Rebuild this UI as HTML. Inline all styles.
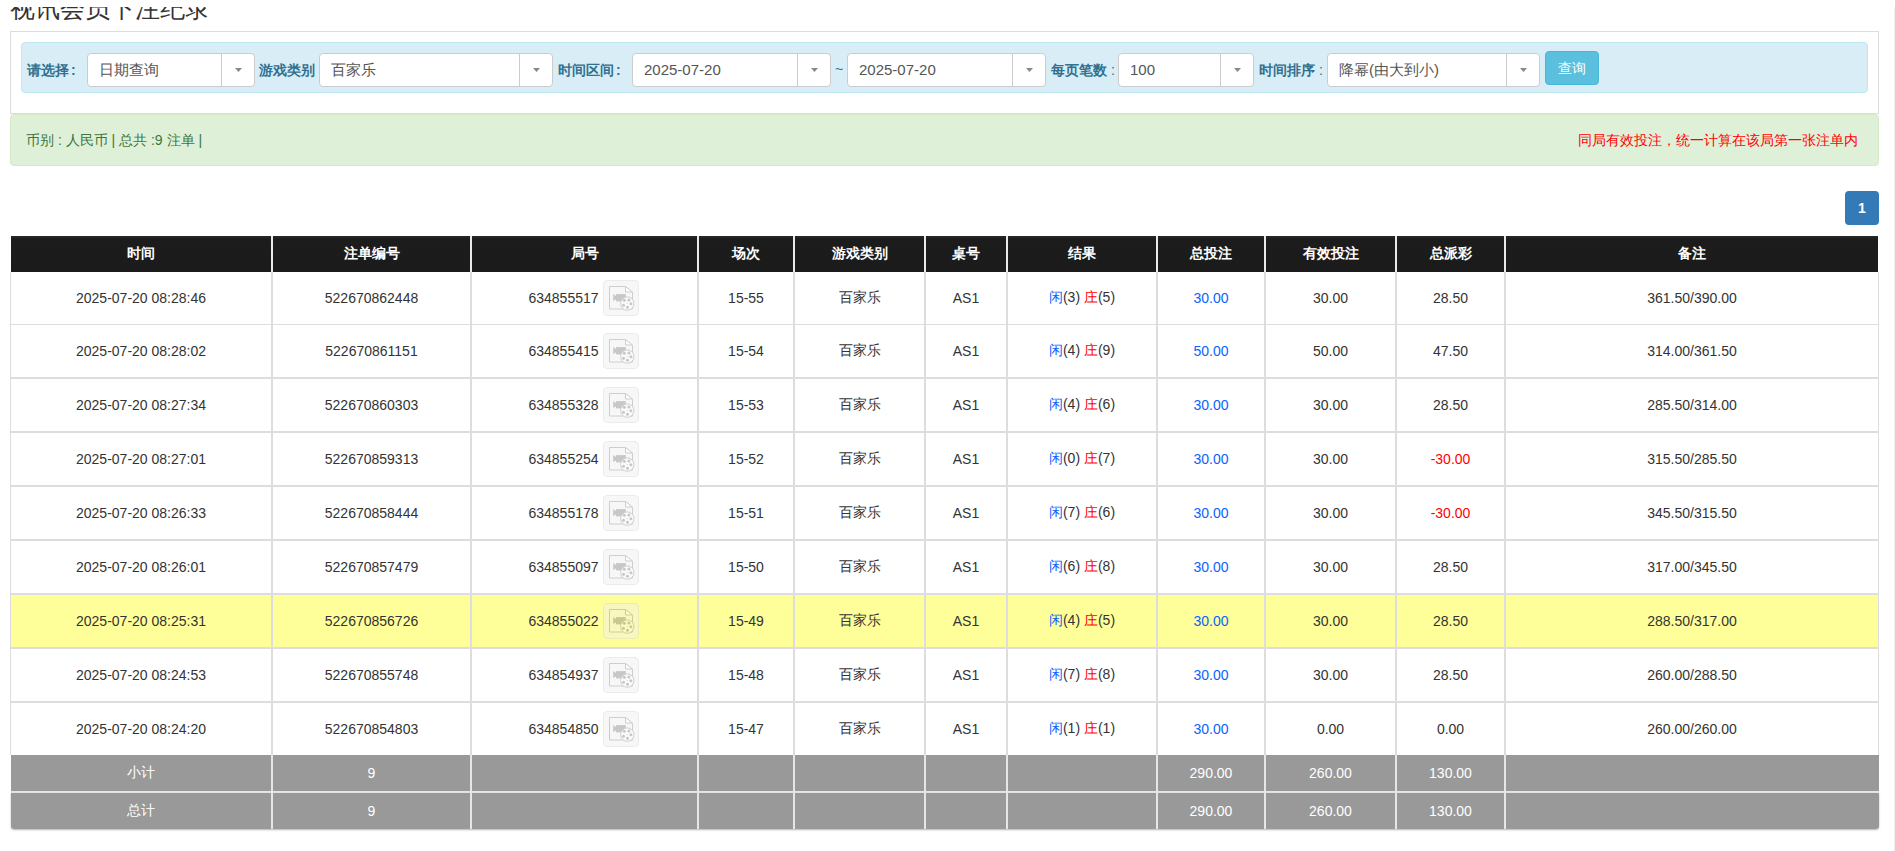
<!DOCTYPE html>
<html><head><meta charset="utf-8">
<style>
*{box-sizing:border-box;margin:0;padding:0}
html,body{width:1895px;height:851px;overflow:hidden;background:#fff}
body{font-family:"Liberation Sans",sans-serif;color:#333;position:relative}
.abs{position:absolute}
#title{left:10px;top:-6px;font-size:24.7px;line-height:30px;color:#333;white-space:nowrap}
#titlecover{left:0;top:0;width:1895px;height:7px;background:#fff}
#panel{left:10px;top:31px;width:1869px;height:83px;border:1px solid #ddd;background:#fff}
#info{left:21px;top:42px;width:1847px;height:51px;border:1px solid #bce8f1;background:#d9edf7;border-radius:4px}
.lbl{position:absolute;font-weight:bold;font-size:14px;color:#31708f;top:62px;line-height:17px;white-space:nowrap}
.sel{position:absolute;top:53px;height:34px;border:1px solid #ccc;border-radius:4px;background:#fff;font-size:15px;color:#555;line-height:32px;padding-left:11px;white-space:nowrap}
.sel .dv{position:absolute;top:0;bottom:0;width:1px;background:#ccc}
.sel .ct{position:absolute;top:14px;width:7px;height:4px;background:#888;clip-path:polygon(0 0,100% 0,50% 100%)}
#btn{left:1545px;top:51px;width:54px;height:34px;background:#5bc0de;border:1px solid #46b8da;border-radius:4px;color:#fff;font-size:14px;line-height:32px;text-align:center}
#ok{left:10px;top:114px;width:1869px;height:52px;background:#dff0d8;border:1px solid #d6e9c6;border-radius:4px}
#oktext{left:26px;top:131px;font-size:14px;color:#3c763d;line-height:18px;white-space:nowrap}
#notice{right:37px;top:131px;font-size:14px;color:#f00;line-height:18px;white-space:nowrap}
#page{left:1845px;top:191px;width:34px;height:34px;background:#337ab7;border-radius:4px;color:#fff;font-size:14px;font-weight:bold;line-height:34px;text-align:center}
#tbl{left:10px;top:236px;width:1869px}
.row{display:flex;position:relative}
.c{border-right:2px solid #ddd;display:flex;align-items:center;justify-content:center;font-size:14px;white-space:nowrap}
.hd .c{background:linear-gradient(#2a2a2a 0,#1c1c1c 3px,#1b1b1b);color:#fff;font-weight:bold;font-size:14px;border-right-color:#e9e9e9;height:36px}
.w1{width:262px}.w2{width:199px}.w3{width:227px}.w4{width:96px}.w5{width:131px}.w6{width:82px}.w7{width:150px}.w8{width:108px}.w9{width:131px}.w10{width:109px}.w11{width:373px;border-right-width:1px}
.bd{border-left:1px solid #ddd}
.bd .c{height:100%}
.blue{color:#0863ff}
.red{color:#f00}
.ico{display:inline-block;width:36px;height:36px;border:1px solid #d5d5d5;border-radius:4px;background:#efefef;margin-left:4px;margin-right:2px;position:relative;opacity:.45}.ico svg{position:absolute;left:-1px;top:-1px}
.yl{background:#ffff99}
.sum .c{background:#999;color:#fff;font-size:14px;border-right-color:#e6e6e6}
</style></head><body>
<div id="title" class="abs">视讯会员下注纪录</div>
<div id="titlecover" class="abs"></div>
<div class="abs" style="left:1894px;top:7px;width:1px;height:844px;background:#efefef"></div>
<div id="panel" class="abs"></div>
<div id="info" class="abs"></div>
<div class="lbl" style="left:27px">请选择<span style="margin-left:2px">:</span></div>
<div class="sel" style="left:87px;width:168px">日期查询<span class="dv" style="left:133px"></span><span class="ct" style="left:147px"></span></div>
<div class="lbl" style="left:259px">游戏类别</div>
<div class="sel" style="left:319px;width:234px">百家乐<span class="dv" style="left:199px"></span><span class="ct" style="left:213px"></span></div>
<div class="lbl" style="left:558px">时间区间<span style="margin-left:2px">:</span></div>
<div class="sel" style="left:632px;width:199px">2025-07-20<span class="dv" style="left:164px"></span><span class="ct" style="left:178px"></span></div>
<div class="abs" style="left:835px;top:61px;font-size:14px;color:#31708f">~</div>
<div class="sel" style="left:847px;width:199px">2025-07-20<span class="dv" style="left:164px"></span><span class="ct" style="left:178px"></span></div>
<div class="lbl" style="left:1051px">每页笔数 <span style="font-weight:normal">:</span></div>
<div class="sel" style="left:1118px;width:136px">100<span class="dv" style="left:101px"></span><span class="ct" style="left:115px"></span></div>
<div class="lbl" style="left:1259px">时间排序 <span style="font-weight:normal">:</span></div>
<div class="sel" style="left:1327px;width:213px">降幂(由大到小)<span class="dv" style="left:178px"></span><span class="ct" style="left:192px"></span></div>
<div id="btn" class="abs">查询</div>
<div id="ok" class="abs"></div>
<div id="oktext" class="abs">币别 : 人民币 | 总共 :9 注单 |</div>
<div id="notice" class="abs">同局有效投注，统一计算在该局第一张注单内</div>
<div id="page" class="abs">1</div>
<div id="tbl" class="abs">
<div class="row hd" style="margin-left:1px"><div class="c w1">时间</div><div class="c w2">注单编号</div><div class="c w3">局号</div><div class="c w4">场次</div><div class="c w5">游戏类别</div><div class="c w6">桌号</div><div class="c w7">结果</div><div class="c w8">总投注</div><div class="c w9">有效投注</div><div class="c w10">总派彩</div><div class="c w11" style="border-right:0;width:372px">备注</div></div>
<div class="row bd" style="height:53px;border-bottom:1px solid #ddd"><div class="c w1">2025-07-20 08:28:46</div><div class="c w2">522670862448</div><div class="c w3">634855517<span class="ico"><svg width="36" height="36" viewBox="0 0 36 36"><path d="M6.5 6.5H22.5L29.5 12.5V29H6.5Z" fill="#efefef" stroke="#949494" stroke-width="1"/><path d="M22.5 6.5V12H29.5Z" fill="#fff" stroke="#949494" stroke-width="1" stroke-linejoin="round"/><rect x="13" y="14.1" width="9.8" height="7.3" fill="#858585"/><path d="M10.2 14.1L13.2 16.3V19.3L10.2 21Z" fill="#858585"/><circle cx="24.3" cy="23.6" r="6.7" fill="#f6f6f6" stroke="#949494" stroke-width="1"/><circle cx="21.3" cy="20.3" r="1.5" fill="#858585"/><circle cx="25.9" cy="19.9" r="1.5" fill="#858585"/><circle cx="27.9" cy="23.7" r="1.5" fill="#858585"/><circle cx="24.5" cy="27.2" r="1.5" fill="#858585"/><circle cx="20.5" cy="25.3" r="1.5" fill="#858585"/><circle cx="24.1" cy="23.4" r=".5" fill="#858585"/></svg></span></div><div class="c w4">15-55</div><div class="c w5">百家乐</div><div class="c w6">AS1</div><div class="c w7"><span><span class="blue">闲</span>(3) <span class="red">庄</span>(5)</span></div><div class="c w8 blue">30.00</div><div class="c w9">30.00</div><div class="c w10">28.50</div><div class="c w11">361.50/390.00</div></div>
<div class="row bd" style="height:54px;border-bottom:2px solid #ddd"><div class="c w1">2025-07-20 08:28:02</div><div class="c w2">522670861151</div><div class="c w3">634855415<span class="ico"><svg width="36" height="36" viewBox="0 0 36 36"><path d="M6.5 6.5H22.5L29.5 12.5V29H6.5Z" fill="#efefef" stroke="#949494" stroke-width="1"/><path d="M22.5 6.5V12H29.5Z" fill="#fff" stroke="#949494" stroke-width="1" stroke-linejoin="round"/><rect x="13" y="14.1" width="9.8" height="7.3" fill="#858585"/><path d="M10.2 14.1L13.2 16.3V19.3L10.2 21Z" fill="#858585"/><circle cx="24.3" cy="23.6" r="6.7" fill="#f6f6f6" stroke="#949494" stroke-width="1"/><circle cx="21.3" cy="20.3" r="1.5" fill="#858585"/><circle cx="25.9" cy="19.9" r="1.5" fill="#858585"/><circle cx="27.9" cy="23.7" r="1.5" fill="#858585"/><circle cx="24.5" cy="27.2" r="1.5" fill="#858585"/><circle cx="20.5" cy="25.3" r="1.5" fill="#858585"/><circle cx="24.1" cy="23.4" r=".5" fill="#858585"/></svg></span></div><div class="c w4">15-54</div><div class="c w5">百家乐</div><div class="c w6">AS1</div><div class="c w7"><span><span class="blue">闲</span>(4) <span class="red">庄</span>(9)</span></div><div class="c w8 blue">50.00</div><div class="c w9">50.00</div><div class="c w10">47.50</div><div class="c w11">314.00/361.50</div></div>
<div class="row bd" style="height:54px;border-bottom:2px solid #ddd"><div class="c w1">2025-07-20 08:27:34</div><div class="c w2">522670860303</div><div class="c w3">634855328<span class="ico"><svg width="36" height="36" viewBox="0 0 36 36"><path d="M6.5 6.5H22.5L29.5 12.5V29H6.5Z" fill="#efefef" stroke="#949494" stroke-width="1"/><path d="M22.5 6.5V12H29.5Z" fill="#fff" stroke="#949494" stroke-width="1" stroke-linejoin="round"/><rect x="13" y="14.1" width="9.8" height="7.3" fill="#858585"/><path d="M10.2 14.1L13.2 16.3V19.3L10.2 21Z" fill="#858585"/><circle cx="24.3" cy="23.6" r="6.7" fill="#f6f6f6" stroke="#949494" stroke-width="1"/><circle cx="21.3" cy="20.3" r="1.5" fill="#858585"/><circle cx="25.9" cy="19.9" r="1.5" fill="#858585"/><circle cx="27.9" cy="23.7" r="1.5" fill="#858585"/><circle cx="24.5" cy="27.2" r="1.5" fill="#858585"/><circle cx="20.5" cy="25.3" r="1.5" fill="#858585"/><circle cx="24.1" cy="23.4" r=".5" fill="#858585"/></svg></span></div><div class="c w4">15-53</div><div class="c w5">百家乐</div><div class="c w6">AS1</div><div class="c w7"><span><span class="blue">闲</span>(4) <span class="red">庄</span>(6)</span></div><div class="c w8 blue">30.00</div><div class="c w9">30.00</div><div class="c w10">28.50</div><div class="c w11">285.50/314.00</div></div>
<div class="row bd" style="height:54px;border-bottom:2px solid #ddd"><div class="c w1">2025-07-20 08:27:01</div><div class="c w2">522670859313</div><div class="c w3">634855254<span class="ico"><svg width="36" height="36" viewBox="0 0 36 36"><path d="M6.5 6.5H22.5L29.5 12.5V29H6.5Z" fill="#efefef" stroke="#949494" stroke-width="1"/><path d="M22.5 6.5V12H29.5Z" fill="#fff" stroke="#949494" stroke-width="1" stroke-linejoin="round"/><rect x="13" y="14.1" width="9.8" height="7.3" fill="#858585"/><path d="M10.2 14.1L13.2 16.3V19.3L10.2 21Z" fill="#858585"/><circle cx="24.3" cy="23.6" r="6.7" fill="#f6f6f6" stroke="#949494" stroke-width="1"/><circle cx="21.3" cy="20.3" r="1.5" fill="#858585"/><circle cx="25.9" cy="19.9" r="1.5" fill="#858585"/><circle cx="27.9" cy="23.7" r="1.5" fill="#858585"/><circle cx="24.5" cy="27.2" r="1.5" fill="#858585"/><circle cx="20.5" cy="25.3" r="1.5" fill="#858585"/><circle cx="24.1" cy="23.4" r=".5" fill="#858585"/></svg></span></div><div class="c w4">15-52</div><div class="c w5">百家乐</div><div class="c w6">AS1</div><div class="c w7"><span><span class="blue">闲</span>(0) <span class="red">庄</span>(7)</span></div><div class="c w8 blue">30.00</div><div class="c w9">30.00</div><div class="c w10 red">-30.00</div><div class="c w11">315.50/285.50</div></div>
<div class="row bd" style="height:54px;border-bottom:2px solid #ddd"><div class="c w1">2025-07-20 08:26:33</div><div class="c w2">522670858444</div><div class="c w3">634855178<span class="ico"><svg width="36" height="36" viewBox="0 0 36 36"><path d="M6.5 6.5H22.5L29.5 12.5V29H6.5Z" fill="#efefef" stroke="#949494" stroke-width="1"/><path d="M22.5 6.5V12H29.5Z" fill="#fff" stroke="#949494" stroke-width="1" stroke-linejoin="round"/><rect x="13" y="14.1" width="9.8" height="7.3" fill="#858585"/><path d="M10.2 14.1L13.2 16.3V19.3L10.2 21Z" fill="#858585"/><circle cx="24.3" cy="23.6" r="6.7" fill="#f6f6f6" stroke="#949494" stroke-width="1"/><circle cx="21.3" cy="20.3" r="1.5" fill="#858585"/><circle cx="25.9" cy="19.9" r="1.5" fill="#858585"/><circle cx="27.9" cy="23.7" r="1.5" fill="#858585"/><circle cx="24.5" cy="27.2" r="1.5" fill="#858585"/><circle cx="20.5" cy="25.3" r="1.5" fill="#858585"/><circle cx="24.1" cy="23.4" r=".5" fill="#858585"/></svg></span></div><div class="c w4">15-51</div><div class="c w5">百家乐</div><div class="c w6">AS1</div><div class="c w7"><span><span class="blue">闲</span>(7) <span class="red">庄</span>(6)</span></div><div class="c w8 blue">30.00</div><div class="c w9">30.00</div><div class="c w10 red">-30.00</div><div class="c w11">345.50/315.50</div></div>
<div class="row bd" style="height:54px;border-bottom:2px solid #ddd"><div class="c w1">2025-07-20 08:26:01</div><div class="c w2">522670857479</div><div class="c w3">634855097<span class="ico"><svg width="36" height="36" viewBox="0 0 36 36"><path d="M6.5 6.5H22.5L29.5 12.5V29H6.5Z" fill="#efefef" stroke="#949494" stroke-width="1"/><path d="M22.5 6.5V12H29.5Z" fill="#fff" stroke="#949494" stroke-width="1" stroke-linejoin="round"/><rect x="13" y="14.1" width="9.8" height="7.3" fill="#858585"/><path d="M10.2 14.1L13.2 16.3V19.3L10.2 21Z" fill="#858585"/><circle cx="24.3" cy="23.6" r="6.7" fill="#f6f6f6" stroke="#949494" stroke-width="1"/><circle cx="21.3" cy="20.3" r="1.5" fill="#858585"/><circle cx="25.9" cy="19.9" r="1.5" fill="#858585"/><circle cx="27.9" cy="23.7" r="1.5" fill="#858585"/><circle cx="24.5" cy="27.2" r="1.5" fill="#858585"/><circle cx="20.5" cy="25.3" r="1.5" fill="#858585"/><circle cx="24.1" cy="23.4" r=".5" fill="#858585"/></svg></span></div><div class="c w4">15-50</div><div class="c w5">百家乐</div><div class="c w6">AS1</div><div class="c w7"><span><span class="blue">闲</span>(6) <span class="red">庄</span>(8)</span></div><div class="c w8 blue">30.00</div><div class="c w9">30.00</div><div class="c w10">28.50</div><div class="c w11">317.00/345.50</div></div>
<div class="row bd yl" style="height:54px;border-bottom:2px solid #ddd"><div class="c w1">2025-07-20 08:25:31</div><div class="c w2">522670856726</div><div class="c w3">634855022<span class="ico"><svg width="36" height="36" viewBox="0 0 36 36"><path d="M6.5 6.5H22.5L29.5 12.5V29H6.5Z" fill="#efefef" stroke="#949494" stroke-width="1"/><path d="M22.5 6.5V12H29.5Z" fill="#fff" stroke="#949494" stroke-width="1" stroke-linejoin="round"/><rect x="13" y="14.1" width="9.8" height="7.3" fill="#858585"/><path d="M10.2 14.1L13.2 16.3V19.3L10.2 21Z" fill="#858585"/><circle cx="24.3" cy="23.6" r="6.7" fill="#f6f6f6" stroke="#949494" stroke-width="1"/><circle cx="21.3" cy="20.3" r="1.5" fill="#858585"/><circle cx="25.9" cy="19.9" r="1.5" fill="#858585"/><circle cx="27.9" cy="23.7" r="1.5" fill="#858585"/><circle cx="24.5" cy="27.2" r="1.5" fill="#858585"/><circle cx="20.5" cy="25.3" r="1.5" fill="#858585"/><circle cx="24.1" cy="23.4" r=".5" fill="#858585"/></svg></span></div><div class="c w4">15-49</div><div class="c w5">百家乐</div><div class="c w6">AS1</div><div class="c w7"><span><span class="blue">闲</span>(4) <span class="red">庄</span>(5)</span></div><div class="c w8 blue">30.00</div><div class="c w9">30.00</div><div class="c w10">28.50</div><div class="c w11">288.50/317.00</div></div>
<div class="row bd" style="height:54px;border-bottom:2px solid #ddd"><div class="c w1">2025-07-20 08:24:53</div><div class="c w2">522670855748</div><div class="c w3">634854937<span class="ico"><svg width="36" height="36" viewBox="0 0 36 36"><path d="M6.5 6.5H22.5L29.5 12.5V29H6.5Z" fill="#efefef" stroke="#949494" stroke-width="1"/><path d="M22.5 6.5V12H29.5Z" fill="#fff" stroke="#949494" stroke-width="1" stroke-linejoin="round"/><rect x="13" y="14.1" width="9.8" height="7.3" fill="#858585"/><path d="M10.2 14.1L13.2 16.3V19.3L10.2 21Z" fill="#858585"/><circle cx="24.3" cy="23.6" r="6.7" fill="#f6f6f6" stroke="#949494" stroke-width="1"/><circle cx="21.3" cy="20.3" r="1.5" fill="#858585"/><circle cx="25.9" cy="19.9" r="1.5" fill="#858585"/><circle cx="27.9" cy="23.7" r="1.5" fill="#858585"/><circle cx="24.5" cy="27.2" r="1.5" fill="#858585"/><circle cx="20.5" cy="25.3" r="1.5" fill="#858585"/><circle cx="24.1" cy="23.4" r=".5" fill="#858585"/></svg></span></div><div class="c w4">15-48</div><div class="c w5">百家乐</div><div class="c w6">AS1</div><div class="c w7"><span><span class="blue">闲</span>(7) <span class="red">庄</span>(8)</span></div><div class="c w8 blue">30.00</div><div class="c w9">30.00</div><div class="c w10">28.50</div><div class="c w11">260.00/288.50</div></div>
<div class="row bd" style="height:52px;border-bottom:0px solid #ddd"><div class="c w1">2025-07-20 08:24:20</div><div class="c w2">522670854803</div><div class="c w3">634854850<span class="ico"><svg width="36" height="36" viewBox="0 0 36 36"><path d="M6.5 6.5H22.5L29.5 12.5V29H6.5Z" fill="#efefef" stroke="#949494" stroke-width="1"/><path d="M22.5 6.5V12H29.5Z" fill="#fff" stroke="#949494" stroke-width="1" stroke-linejoin="round"/><rect x="13" y="14.1" width="9.8" height="7.3" fill="#858585"/><path d="M10.2 14.1L13.2 16.3V19.3L10.2 21Z" fill="#858585"/><circle cx="24.3" cy="23.6" r="6.7" fill="#f6f6f6" stroke="#949494" stroke-width="1"/><circle cx="21.3" cy="20.3" r="1.5" fill="#858585"/><circle cx="25.9" cy="19.9" r="1.5" fill="#858585"/><circle cx="27.9" cy="23.7" r="1.5" fill="#858585"/><circle cx="24.5" cy="27.2" r="1.5" fill="#858585"/><circle cx="20.5" cy="25.3" r="1.5" fill="#858585"/><circle cx="24.1" cy="23.4" r=".5" fill="#858585"/></svg></span></div><div class="c w4">15-47</div><div class="c w5">百家乐</div><div class="c w6">AS1</div><div class="c w7"><span><span class="blue">闲</span>(1) <span class="red">庄</span>(1)</span></div><div class="c w8 blue">30.00</div><div class="c w9">0.00</div><div class="c w10">0.00</div><div class="c w11">260.00/260.00</div></div>
<div class="row sum" style="height:38px;border-bottom:2px solid #e6e6e6;margin-left:1px"><div class="c w1">小计</div><div class="c w2">9</div><div class="c w3"></div><div class="c w4"></div><div class="c w5"></div><div class="c w6"></div><div class="c w7"></div><div class="c w8">290.00</div><div class="c w9">260.00</div><div class="c w10">130.00</div><div class="c w11" style="border-right:0"></div></div>
<div class="row sum" style="height:36px;border-bottom:0px solid #e6e6e6;margin-left:1px;border-radius:0 0 3px 3px;overflow:hidden;box-shadow:0 1px 2px rgba(0,0,0,.3)"><div class="c w1">总计</div><div class="c w2">9</div><div class="c w3"></div><div class="c w4"></div><div class="c w5"></div><div class="c w6"></div><div class="c w7"></div><div class="c w8">290.00</div><div class="c w9">260.00</div><div class="c w10">130.00</div><div class="c w11" style="border-right:0"></div></div>
</div>
</body></html>
